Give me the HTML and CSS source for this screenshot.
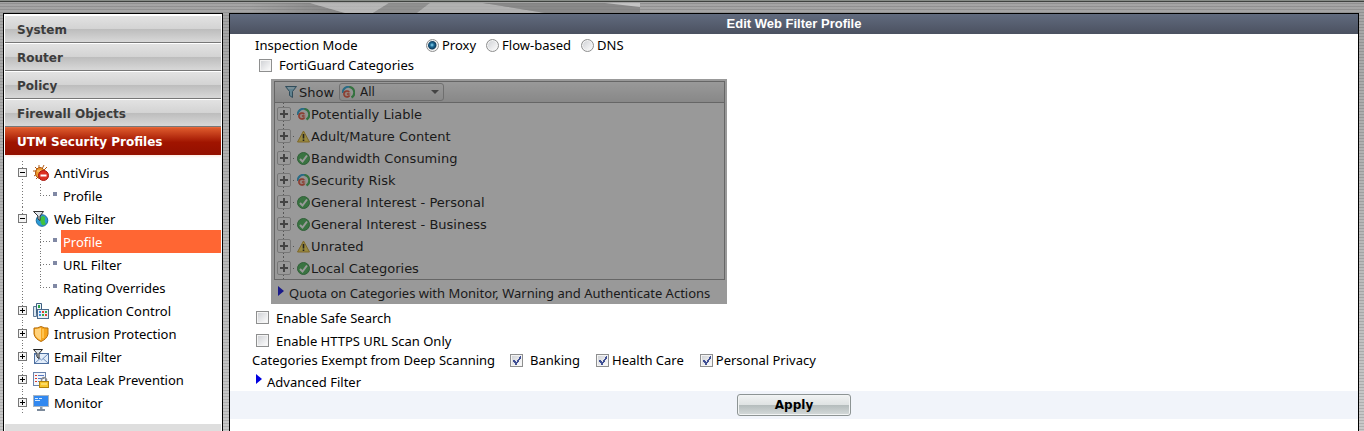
FILE: index.html
```html
<!DOCTYPE html>
<html lang="en">
  <head>
    <meta charset="UTF-8" />
    <title>Edit Web Filter Profile</title>
    <link rel="stylesheet" href="styles.css">
  </head>
  <body>
    <svg class="symbols" aria-hidden="true">
      <symbol id="guard" viewBox="0 0 13 13">
        <circle cx="6.500" cy="6.500" r="6" fill="#f2f4f4" />
        <path d="M.8 7A5.700 5.700 0 0 1 8 1" fill="none" stroke="#1fa3d6" stroke-width="2" />
        <path d="M7.500 1A5.700 5.700 0 0 1 9.500 11.500" fill="none" stroke="#35b04a" stroke-width="2.200" />
        <circle cx="5" cy="8" r="3.800" fill="#f6cdbf" />
        <path d="M7.200 6A3 3 0 1 0 7.500 9.500" fill="none" stroke="#e2452c" stroke-width="1.600" />
        <path d="M5 8H7.500" stroke="#e2452c" stroke-width="1.500" />
      </symbol>
      <symbol id="warn" viewBox="0 0 13 13">
        <path d="M6.500 1L12.500 12H.5Z" fill="#ffe04a" stroke="#c99a1c" stroke-linejoin="round" />
        <path d="M6.500 4V8.500M6.500 9.500V11" stroke="#111" stroke-width="1.600" />
      </symbol>
      <symbol id="allow" viewBox="0 0 13 13">
        <circle cx="6.500" cy="6.500" r="6" fill="#3fb34f" stroke="#2b8a3a" />
        <path d="M3 7L5.500 9.500L10 3.500" fill="none" stroke="#fff" stroke-width="2" />
      </symbol>
      <symbol id="funnel" viewBox="0 0 12 12">
        <path d="M.5 .5H11.500L7.500 5.500V11.500L4.500 9.500V5.500Z" fill="#8fd0ea" stroke="#2f6580" />
        <path d="M3 2H9" stroke="#e8f8ff" />
      </symbol>
    </svg>

    <header class="banner">
      <svg class="banner-art" viewBox="0 0 392 10" preserveAspectRatio="none" aria-hidden="true">
        <defs>
          <linearGradient id="fade">
            <stop offset="0" stop-color="#777" stop-opacity="0" />
            <stop offset="1" stop-color="#777" />
          </linearGradient>
        </defs>
        <path d="M0 0H60L95 10H0Z" fill="url(#fade)" />
        <path d="M60 0H139L123 10H95Z" fill="#bdbdbd" />
        <path d="M139 0H180L167 10H123Z" fill="#8a8a8a" />
        <path d="M180 0H233L295 10H167Z" fill="#b6b6b6" />
        <path d="M233 0H390V10H295Z" fill="#808080" />
        <path d="M355 0H390V4Z" fill="#cfcfcf" />
      </svg>
    </header>

    <div class="layout">
      <nav class="sidebar">
        <button class="menu-item">System</button>
        <button class="menu-item">Router</button>
        <button class="menu-item">Policy</button>
        <button class="menu-item">Firewall Objects</button>
        <button class="menu-item active">UTM Security Profiles</button>

        <ul class="tree">
          <li>
            <div class="node">
              <span class="toggle"></span>
              <svg class="icon" viewBox="0 0 16 16">
                <path d="M2 2L5 5M6 0V4M11 0L9 4M14 2L11 5M0 6H4M1 11L4 9M3 14L5 12" stroke="#b35a12" fill="none" />
                <ellipse cx="7" cy="8" rx="4.500" ry="5.500" fill="#ef9a2c" stroke="#a8500d" />
                <path d="M4 6H10" stroke="#ffd489" />
                <circle cx="10.500" cy="10.500" r="5" fill="#dd3222" stroke="#a81a10" />
                <rect x="7.500" y="9.500" width="6" height="2" fill="#fff" />
              </svg>
              <a href="#">AntiVirus</a>
            </div>
            <ul class="subtree">
              <li><a href="#">Profile</a></li>
            </ul>
          </li>
          <li>
            <div class="node">
              <span class="toggle"></span>
              <svg class="icon" viewBox="0 0 16 16">
                <circle cx="9" cy="9.500" r="5.800" fill="#2b9ad6" stroke="#1b6c9d" />
                <path d="M9 5Q13 5 12 8T13 13Q9 16 8 12T6 9Z" fill="#3fc23e" />
                <path d="M.5 .5H10.500L7 5V9.500L5 8V5Z" fill="#dfe5ea" stroke="#333" />
              </svg>
              <a href="#">Web Filter</a>
            </div>
            <ul class="subtree">
              <li><a class="current" href="#">Profile</a></li>
              <li><a href="#">URL Filter</a></li>
              <li><a href="#">Rating Overrides</a></li>
            </ul>
          </li>
          <li>
            <div class="node">
              <span class="toggle closed"></span>
              <svg class="icon" viewBox="0 0 16 16">
                <path d="M.5 3.500H3.500V13.500H.5Z" fill="#dbe6f1" stroke="#5d7896" />
                <path d="M3.500 .5H8.500V10H3.500Z" fill="#eef4f9" stroke="#3e5f80" />
                <rect x="5" y="2" width="2" height="3" fill="#2ba34a" />
                <rect x="4.500" y="6.500" width="11" height="9" fill="#e8eff6" stroke="#4c6b8c" />
                <path d="M6 9H8M6 12H8" stroke="#3a8be0" stroke-width="2" />
                <path d="M9 9H11M12 12H14" stroke="#e0452e" stroke-width="2" />
                <path d="M12 9H14M9 12H11" stroke="#39a849" stroke-width="2" />
              </svg>
              <a href="#">Application Control</a>
            </div>
          </li>
          <li>
            <div class="node">
              <span class="toggle closed"></span>
              <svg class="icon" viewBox="0 0 16 16">
                <path d="M1 2Q4 2.500 8 .5Q12 2.500 15 2V8Q14 13 8 15.500Q2 13 1 8Z" fill="#f6a51d" stroke="#b56d0b" />
                <path d="M2 3Q5 3.300 8 1.800V14.300Q3 12 2 8Z" fill="#ffd27c" />
                <path d="M10 3V12" stroke="#ffc34f" stroke-width="2" />
              </svg>
              <a href="#">Intrusion Protection</a>
            </div>
          </li>
          <li>
            <div class="node">
              <span class="toggle closed"></span>
              <svg class="icon" viewBox="0 0 16 16">
                <rect x="1.500" y="4.500" width="14" height="10" fill="#e2edfa" stroke="#4d6f9f" />
                <path d="M2 14L7 9.500M15 14L10 9.500M2 5L8.500 11L15 5" fill="none" stroke="#6d8cba" />
                <path d="M.5 .5H9.500L6 4.500V9.500L4 8V4.500Z" fill="#dfe5ea" stroke="#222" />
              </svg>
              <a href="#">Email Filter</a>
            </div>
          </li>
          <li>
            <div class="node">
              <span class="toggle closed"></span>
              <svg class="icon" viewBox="0 0 16 16">
                <rect x=".5" y=".5" width="12" height="13" fill="#f3f6fb" stroke="#6a83ab" />
                <path d="M2 3.500H4M2 6.500H4M2 9.500H4" stroke="#d8392b" />
                <path d="M5 3.500H11M5 6.500H11M5 9.500H7" stroke="#5479c4" />
                <path d="M8.500 10V7.500Q11 3.500 13.500 7.500V10" fill="none" stroke="#8d8d8d" stroke-width="1.500" />
                <rect x="6.500" y="9.500" width="9" height="6" fill="#f7c52c" stroke="#b0810d" />
                <path d="M8 12H14" stroke="#fff0a0" />
              </svg>
              <a href="#">Data Leak Prevention</a>
            </div>
          </li>
          <li>
            <div class="node">
              <span class="toggle closed"></span>
              <svg class="icon" viewBox="0 0 16 16">
                <rect x=".5" y=".5" width="15" height="11" fill="#3188f0" stroke="#a7b4c3" />
                <path d="M2 3.500H5M6 3.500H9M2 5.500H7" stroke="#d5e9ff" />
                <path d="M7 12H9.500V14H7Z" fill="#8b98a8" />
                <path d="M4 15H12" stroke="#7c8a9b" stroke-width="2" />
              </svg>
              <a href="#">Monitor</a>
            </div>
          </li>
        </ul>
        <div class="menu-end"></div>
      </nav>

      <main class="panel">
        <h1>Edit Web Filter Profile</h1>
        <form>
          <div class="settings">
            <div class="row mode">
              <span class="mode-label">Inspection Mode</span>
              <label><input type="radio" name="mode" checked>Proxy</label>
              <label><input type="radio" name="mode">Flow-based</label>
              <label><input type="radio" name="mode">DNS</label>
            </div>
            <div class="row guard">
              <label><input type="checkbox">FortiGuard Categories</label>
            </div>

            <div class="categories">
              <div class="category-box">
                <div class="toolbar">
                  <svg class="funnel"><use href="#funnel" /></svg>
                  <label for="show">Show</label>
                  <div class="picker">
                    <svg class="badge"><use href="#guard" /></svg>
                    <select id="show">
                      <option>All</option>
                    </select>
                  </div>
                </div>
                <ul class="category-list">
                  <li><span class="plus"></span><svg class="badge"><use href="#guard" /></svg>Potentially Liable</li>
                  <li><span class="plus"></span><svg class="badge"><use href="#warn" /></svg>Adult/Mature Content</li>
                  <li><span class="plus"></span><svg class="badge"><use href="#allow" /></svg>Bandwidth Consuming</li>
                  <li><span class="plus"></span><svg class="badge"><use href="#guard" /></svg>Security Risk</li>
                  <li><span class="plus"></span><svg class="badge"><use href="#allow" /></svg>General Interest - Personal</li>
                  <li><span class="plus"></span><svg class="badge"><use href="#allow" /></svg>General Interest - Business</li>
                  <li><span class="plus"></span><svg class="badge"><use href="#warn" /></svg>Unrated</li>
                  <li><span class="plus"></span><svg class="badge"><use href="#allow" /></svg>Local Categories</li>
                </ul>
              </div>
              <div class="quota"><span class="arrow"></span>Quota on Categories with Monitor, Warning and Authenticate Actions</div>
            </div>

            <div class="row option">
              <label><input type="checkbox">Enable Safe Search</label>
            </div>
            <div class="row option">
              <label><input type="checkbox">Enable HTTPS URL Scan Only</label>
            </div>
            <div class="row exempt">
              <span class="exempt-label">Categories Exempt from Deep Scanning</span>
              <label class="banking"><input type="checkbox" checked>Banking</label>
              <label><input type="checkbox" checked>Health Care</label>
              <label><input type="checkbox" checked>Personal Privacy</label>
            </div>
            <div class="row advanced"><span class="arrow"></span>Advanced Filter</div>
          </div>
          <div class="actions">
            <button class="apply" type="button">Apply</button>
          </div>
        </form>
      </main>
    </div>
  </body>
</html>
```
FILE: styles.css
```css
* {
  box-sizing: border-box;
}

body {
  margin: 0;
  height: 100vh;
  overflow: hidden;
  display: flex;
  flex-direction: column;
  font-family: "Noto Sans", Tahoma, sans-serif;
  font-size: 13px;
  color: #000;
  background:
    repeating-linear-gradient(rgba(0, 0, 0, 0.12) 0 1px, transparent 1px 3px),
    linear-gradient(#a4a4a4, #c8c8c8);
}

ul {
  list-style: none;
  margin: 0;
  padding: 0;
}

a {
  color: inherit;
  text-decoration: none;
}

.symbols {
  position: absolute;
  width: 0;
  height: 0;
}

.banner {
  height: 13px;
  flex: none;
  padding-left: 250px;
  border-top: 1px solid #888d88;
  box-shadow: inset 0 1px #3f423f;
}

.banner-art {
  display: block;
  width: 392px;
  height: 10px;
  margin-top: 2px;
  opacity: 0.75;
}

.layout {
  flex: 1;
  display: flex;
  gap: 6px;
  padding: 0 5px 0 3px;
  min-height: 0;
}

/* sidebar */
.sidebar {
  flex: none;
  width: 220px;
  padding: 1px;
  background: #fff;
  border: 1px solid #000;
  border-bottom: none;
}

.menu-item {
  display: block;
  width: 100%;
  height: 28px;
  padding: 2px 12px 0;
  border: none;
  border-top: 1px solid #fff;
  border-bottom: 1px solid #777;
  background: linear-gradient(#e2e2e2, #d3d3d3 50%, #bdbdbd 51%, #d8d8d8);
  color: #3c3c3c;
  font-family: "DejaVu Sans", Verdana, sans-serif;
  font-size: 12px;
  font-weight: bold;
  text-align: left;
}

.menu-item.active {
  border-top-color: #e8673a;
  border-bottom-color: #941200;
  background: linear-gradient(#dd5a2c, #a01400 55%, #941000);
  color: #fff;
}

.tree {
  padding: 6px 0 10px 13px;
  background: linear-gradient(#ffe9e1, #fff 3px);
}

.tree > li {
  background: repeating-linear-gradient(#777 0 1px, transparent 1px 3px) 4px 0 / 1px 100% no-repeat;
}

.node {
  display: flex;
  align-items: center;
  height: 23px;
}

.node a {
  margin-left: 5px;
}

.toggle {
  width: 9px;
  height: 9px;
  margin-right: 6px;
  border: 1px solid #777;
  background: linear-gradient(#000, #000) center / 5px 1px no-repeat, #f4f4f4;
}

.toggle.closed {
  background:
    linear-gradient(#000, #000) center / 5px 1px no-repeat,
    linear-gradient(#000, #000) center / 1px 5px no-repeat,
    #f4f4f4;
}

.icon {
  width: 16px;
  height: 16px;
}

.subtree {
  padding-left: 22px;
}

.subtree li {
  display: flex;
  align-items: center;
  height: 23px;
  background:
    repeating-linear-gradient(#777 0 1px, transparent 1px 3px) 0 0 / 1px 100% no-repeat,
    repeating-linear-gradient(90deg, #777 0 1px, transparent 1px 3px) 0 11px / 10px 1px no-repeat;
}

.subtree li:last-child {
  background-size: 1px 12px, 10px 1px;
}

.subtree li::before {
  content: "";
  width: 4px;
  height: 4px;
  margin: 0 4px 4px 13px;
  background: #8088a4;
}

.subtree a {
  flex: 1;
  padding: 1px 0 0 2px;
  line-height: 22px;
}

.subtree .current {
  background: #ff6633;
  color: #fff;
}

.menu-end {
  height: 28px;
  background: #dedede;
}

/* main panel */
.panel {
  flex: 1;
  background: #fff;
  border: 1px solid #000;
  border-bottom: none;
}

h1 {
  margin: 0;
  height: 20px;
  background: linear-gradient(#616b7e, #4b5160);
  color: #fff;
  font-family: "Liberation Sans", Arial, sans-serif;
  font-size: 13px;
  line-height: 20px;
  text-align: center;
}

.settings {
  padding: 1px 22px 0;
}

.row,
.row label {
  display: flex;
  align-items: center;
}

input {
  appearance: none;
  flex: none;
  width: 13px;
  height: 13px;
  margin: 0;
  border: 1px solid #8e8f8f;
  background: linear-gradient(135deg, #cdcfd3, #fff);
  box-shadow: inset 0 0 0 1px #f4f4f4;
}

input[type="radio"] {
  border-radius: 50%;
}

input[type="radio"]:checked {
  background: radial-gradient(circle at 5px 5px, #8fdcf7, #1d6a96 2px, #0e3c5e 4px, #eee 5px);
}

input[type="checkbox"]:checked {
  background:
    linear-gradient(125deg, transparent 45%, #3f4f94 45% 62%, transparent 62%) 4px 1px / 6px 9px no-repeat,
    linear-gradient(55deg, transparent 30%, #3f4f94 30% 70%, transparent 70%) 2px 5px / 4px 4px no-repeat,
    linear-gradient(135deg, #cdcfd3, #fff);
}

.mode {
  height: 20px;
  padding-left: 3px;
}

.mode-label {
  width: 171px;
}

.mode label {
  gap: 3px;
  margin-right: 10px;
}

.guard {
  height: 20px;
  padding-left: 7px;
}

.guard label,
.option label {
  gap: 7px;
}

.categories {
  position: relative;
  width: 456px;
  margin: 4px 0 2px 19px;
  padding: 2px 2px 0 3px;
  background: #fff;
}

.categories::after {
  content: "";
  position: absolute;
  inset: 0;
  background: #333;
  opacity: 0.5;
}

.category-box {
  border: 1px solid #999;
  font-family: "DejaVu Sans", Verdana, sans-serif;
}

.toolbar {
  display: flex;
  align-items: center;
  height: 21px;
  padding-left: 10px;
  border-bottom: 1px solid #999;
  background: linear-gradient(#fff, #dcdcdc);
}

.funnel {
  width: 12px;
  height: 12px;
  margin-right: 2px;
}

.toolbar label {
  width: 35px;
}

.picker {
  display: flex;
  align-items: center;
  width: 105px;
  height: 18px;
  margin-left: 5px;
  padding: 0 4px 0 2px;
  border: 1px solid #aaa;
  border-radius: 3px;
}

.picker::after {
  content: "";
  border: 4px solid transparent;
  border-top-color: #555;
  border-bottom: none;
}

.picker select {
  appearance: none;
  flex: 1;
  padding: 0 0 0 5px;
  border: none;
  background: none;
  color: #000;
  font-family: inherit;
  font-size: 12px;
}

.badge {
  flex: none;
  width: 13px;
  height: 13px;
}

.category-list li {
  display: flex;
  align-items: center;
  height: 22px;
  padding-left: 2px;
  background:
    repeating-linear-gradient(#777 0 1px, transparent 1px 3px) 8px 0 / 1px 100% no-repeat,
    repeating-linear-gradient(90deg, #777 0 1px, transparent 1px 3px) 15px 11px / 5px 1px no-repeat;
}

.category-list .badge {
  margin-left: 6px;
  margin-right: 1px;
}

.plus {
  width: 14px;
  height: 14px;
  border: 1px solid #bbb;
  border-radius: 2px;
  background:
    linear-gradient(#555, #555) center / 8px 2px no-repeat,
    linear-gradient(#555, #555) center / 2px 8px no-repeat,
    #fff;
}

.quota {
  display: flex;
  align-items: center;
  height: 24px;
  padding: 2px 0 0 4px;
  white-space: nowrap;
}

.arrow {
  margin: 0 5px 5px 0;
  border: 5px solid transparent;
  border-left: 6px solid #0000e0;
  border-right: none;
}

.option {
  height: 23px;
  padding-left: 4px;
}

.exempt {
  height: 16px;
}

.exempt-label {
  width: 250px;
}

.exempt label {
  gap: 3px;
  margin-right: 16px;
}

.exempt .banking {
  gap: 7px;
  margin-left: 8px;
}

.advanced {
  height: 23px;
  padding: 4px 0 0 4px;
}

.actions {
  display: flex;
  justify-content: center;
  padding: 3px;
  background: #f1f4fa;
}

.apply {
  width: 114px;
  height: 22px;
  border: 1px solid #8d9494;
  border-radius: 3px;
  background: linear-gradient(#f1f3f3, #dfe3e3 48%, #b4bcbc 50%, #d5dada);
  box-shadow: inset 0 0 0 1px #f2f4f4;
  font-family: "DejaVu Sans", Verdana, sans-serif;
  font-size: 12px;
  font-weight: bold;
}
```
